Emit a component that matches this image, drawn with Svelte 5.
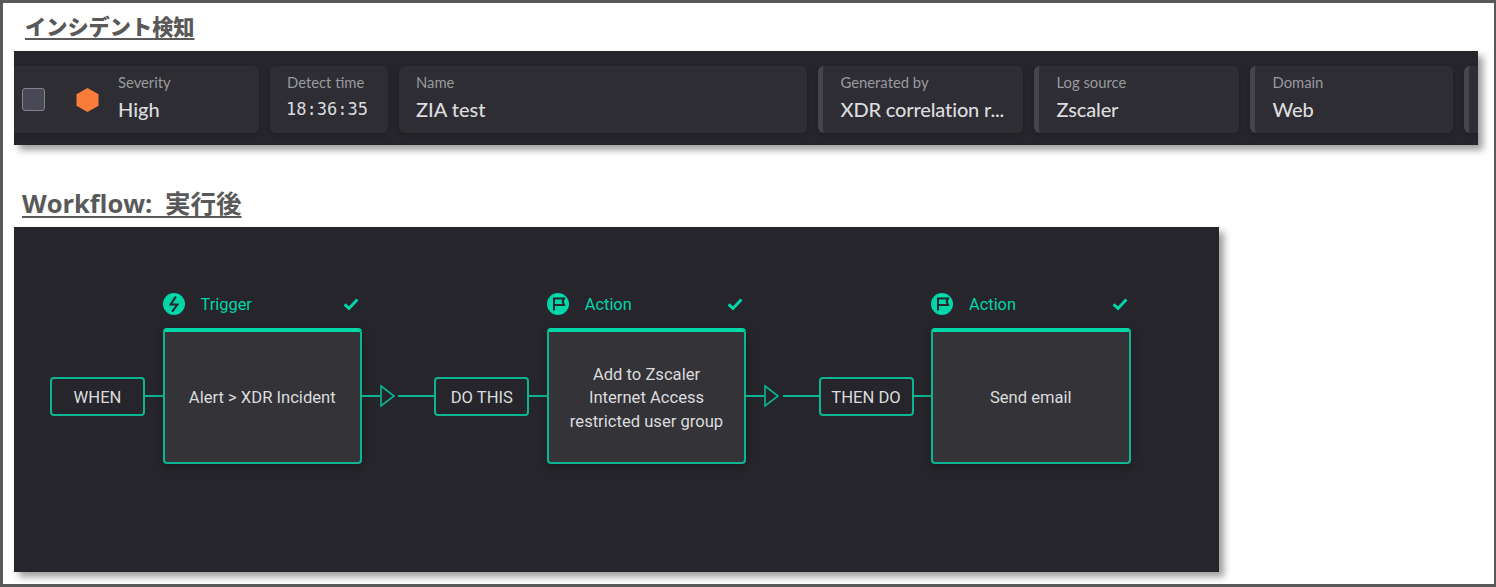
<script lang="ts">
  const fields = [
    { label: 'Detect time', value: '18:36:35', mono: true, width: 118 },
    { label: 'Name', value: 'ZIA test', width: 408 },
    { label: 'Generated by', value: 'XDR correlation r...', width: 205, accent: true },
    { label: 'Log source', value: 'Zscaler', width: 205, accent: true },
    { label: 'Domain', value: 'Web', width: 203, accent: true }
  ];

  const steps = [
    { tag: 'WHEN', kind: 'Trigger', icon: 'bolt', lines: ['Alert > XDR Incident'] },
    { tag: 'DO THIS', kind: 'Action', icon: 'flag', lines: ['Add to Zscaler', 'Internet Access', 'restricted user group'] },
    { tag: 'THEN DO', kind: 'Action', icon: 'flag', lines: ['Send email'] }
  ];
</script>

<div class="frame">
  <h2 class="heading heading--first">インシデント検知</h2>

  <section class="incident">
    <div class="card card--severity">
      <span class="checkbox"></span>
      <svg class="hex" viewBox="0 0 24 26" width="23" height="26" aria-hidden="true">
        <path d="M12 0.5 L23.5 7 V19 L12 25.5 L0.5 19 V7 Z" fill="#fa7c3a" />
      </svg>
      <div class="field">
        <span class="field__label">Severity</span>
        <span class="field__value">High</span>
      </div>
    </div>
    {#each fields as f}
      <div class="card" class:card--accent={f.accent} style="width: {f.width}px">
        <div class="field">
          <span class="field__label">{f.label}</span>
          <span class="field__value" class:field__value--mono={f.mono}>{f.value}</span>
        </div>
      </div>
    {/each}
    <div class="card card--accent card--stub"></div>
  </section>

  <h2 class="heading heading--second">Workflow: 実行後</h2>

  <section class="workflow">
    {#each steps as step, i}
      <div class="link">
        <span class="tag">{step.tag}</span>
        <span class="wire wire--short"></span>
      </div>
      <div class="step">
        <div class="step__head">
          <span class="badge">
            {#if step.icon === 'bolt'}
              <svg viewBox="0 0 22 22" width="22" height="22" aria-hidden="true">
                <circle cx="11" cy="11" r="11" fill="#00d6a8" />
                <path d="M12.8 3.6 L7.6 11.6 H14.4 L9.2 18.6" fill="none" stroke="#25252b" stroke-width="2" stroke-linejoin="miter" />
              </svg>
            {:else}
              <svg viewBox="0 0 22 22" width="22" height="22" aria-hidden="true">
                <circle cx="11" cy="11" r="11" fill="#00d6a8" />
                <path d="M7 17.5 V5.5 H17 L15.6 8.6 L17 12 H7" fill="none" stroke="#25252b" stroke-width="2" />
              </svg>
            {/if}
          </span>
          <span class="step__kind">{step.kind}</span>
          <svg class="tick" viewBox="0 0 16 14" width="16" height="14" aria-hidden="true">
            <path d="M1.6 7.4 L6 11.4 L14.4 2.4" fill="none" stroke="#00d6a8" stroke-width="3" />
          </svg>
        </div>
        <div class="step__box">
          {#each step.lines as line}
            <span>{line}</span>
          {/each}
        </div>
      </div>
      {#if i < steps.length - 1}
        <div class="link">
          <span class="wire wire--short"></span>
          <svg class="arrow" viewBox="0 0 15 24" width="15" height="24" aria-hidden="true">
            <path d="M1 2 L14 12 L1 22 Z" fill="none" stroke="#0cb592" stroke-width="1.6" />
          </svg>
          <span class="gap"></span>
          <span class="wire wire--lead"></span>
        </div>
      {/if}
    {/each}
  </section>
</div>

<style>
  :global(body) {
    margin: 0;
    background: #fff;
  }

  .frame {
    box-sizing: border-box;
    width: 1496px;
    height: 587px;
    padding: 0 15px 0 11px;
    border: solid #595959;
    border-width: 3px 2px 3px 3px;
    overflow: hidden;
  }

  .heading {
    margin: 0;
    color: #595959;
    font-family: "Open Sans", "Noto Sans CJK JP", sans-serif;
    font-weight: 700;
    line-height: 32px;
    text-decoration: underline;
    text-decoration-thickness: 1.5px;
    text-underline-offset: 3px;
  }

  .heading--first {
    margin: 8px 0 0 11px;
    height: 40px;
    font-size: 21.2px;
    font-weight: 900;
  }

  .heading--second {
    margin: 42px 0 0 8px;
    height: 40px;
    font-size: 25.5px;
    word-spacing: 6px;
  }

  .incident {
    display: flex;
    gap: 11px;
    width: 1464px;
    height: 94px;
    padding: 15px 0 12px;
    box-sizing: border-box;
    overflow: hidden;
    background: #25252b;
    box-shadow: 5px 5px 7px rgba(0, 0, 0, 0.38);
    font-family: Lato, "Noto Sans", sans-serif;
  }

  .card {
    box-sizing: border-box;
    flex: none;
    display: flex;
    align-items: center;
    height: 67px;
    padding: 0 17px;
    border-radius: 6px;
    background: #2d2d33;
    box-shadow: 0 2px 5px rgba(0, 0, 0, 0.18);
  }

  .card--severity {
    width: 245px;
    padding: 0 0 0 8px;
    border-radius: 0 6px 6px 0;
  }

  .card--accent {
    border-left: 5px solid #45454f;
    padding-left: 17.5px;
  }

  .card--accent .field__value {
    letter-spacing: -0.15px;
  }

  .card--stub {
    width: 40px;
  }

  .checkbox {
    box-sizing: border-box;
    flex: none;
    width: 23px;
    height: 23px;
    border: 1px solid #84848c;
    border-radius: 3px;
    background: #494955;
  }

  .hex {
    flex: none;
    margin: 0 19px 0 31px;
  }

  .field {
    display: flex;
    flex-direction: column;
    gap: 6px;
    min-width: 0;
    padding-bottom: 4px;
  }

  .field__label {
    color: #9a9a9f;
    font-size: 14.8px;
    line-height: 17px;
    white-space: nowrap;
  }

  .field__value {
    color: #dcdcde;
    font-size: 20px;
    font-weight: 500;
    line-height: 24px;
    white-space: nowrap;
  }

  .field__value--mono {
    margin-left: -1px;
    font-family: "DejaVu Sans Mono", monospace;
    font-size: 17px;
    font-weight: 400;
  }

  .workflow {
    display: flex;
    align-items: flex-end;
    box-sizing: border-box;
    width: 1205px;
    height: 345px;
    padding: 0 0 108px 36px;
    background: #25252b;
    box-shadow: 5px 5px 7px rgba(0, 0, 0, 0.38);
    font-family: Roboto, Inter, sans-serif;
  }

  .link {
    display: flex;
    align-items: center;
    height: 136px;
  }

  .tag {
    box-sizing: border-box;
    display: flex;
    align-items: center;
    justify-content: center;
    width: 95px;
    height: 39px;
    padding-top: 2px;
    border: 2px solid #0cb592;
    border-radius: 4px;
    color: #dcdcde;
    font-size: 16.6px;
    white-space: nowrap;
  }

  .wire {
    height: 2px;
    background: #0cb592;
  }

  .wire--short {
    width: 17.5px;
  }

  .wire--lead {
    width: 36px;
  }

  .arrow {
    display: block;
    flex: none;
  }

  .gap {
    width: 3.75px;
  }

  .step {
    display: flex;
    flex-direction: column;
    width: 199.5px;
  }

  .step__head {
    display: flex;
    align-items: center;
    height: 24px;
    margin-bottom: 12px;
    color: #00d6a8;
  }

  .badge {
    display: flex;
    width: 38px;
  }

  .step__kind {
    flex: 1;
    font-size: 16.4px;
  }

  .tick {
    margin-right: 3px;
  }

  .step__box {
    box-sizing: border-box;
    display: flex;
    flex-direction: column;
    align-items: center;
    justify-content: center;
    height: 136px;
    padding-top: 2px;
    border: 2px solid #0cb592;
    border-top: 4px solid #00d6a8;
    border-radius: 4px;
    background: #333338;
    box-shadow: 0 2px 8px rgba(0, 0, 0, 0.3);
    color: #dcdcde;
    font-size: 16.6px;
    line-height: 23.5px;
  }
</style>
